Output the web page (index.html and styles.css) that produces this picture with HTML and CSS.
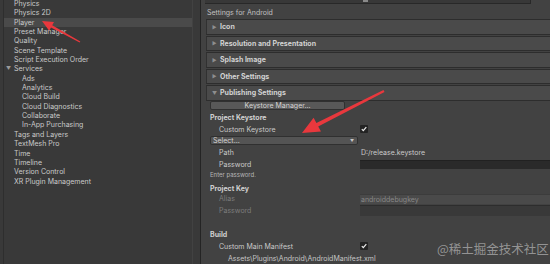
FILE: index.html
```html
<!DOCTYPE html>
<html lang="en">
<head>
  <meta charset="UTF-8" />
  <title>Project Settings · Player</title>
  <link rel="stylesheet" href="styles.css">
</head>
<body>
  <div class="sidebar">
    <ul class="tree">
      <li class="item">Physics</li>
      <li class="item">Physics 2D</li>
      <li class="item selected">Player</li>
      <li class="item">Preset Manager</li>
      <li class="item">Quality</li>
      <li class="item">Scene Template</li>
      <li class="item">Script Execution Order</li>
      <li class="item group"><span class="caret">▼</span>Services</li>
      <li class="item sub">Ads</li>
      <li class="item sub">Analytics</li>
      <li class="item sub">Cloud Build</li>
      <li class="item sub">Cloud Diagnostics</li>
      <li class="item sub">Collaborate</li>
      <li class="item sub">In-App Purchasing</li>
      <li class="item">Tags and Layers</li>
      <li class="item">TextMesh Pro</li>
      <li class="item">Time</li>
      <li class="item">Timeline</li>
      <li class="item">Version Control</li>
      <li class="item">XR Plugin Management</li>
    </ul>
  </div>
  <div class="splitter"></div>

  <div class="inspector">
    <div class="toolbar"><span class="toolbar-box"><span class="toolbar-mark"></span></span></div>
    <div class="platform">Settings for Android</div>

    <div class="foldout"><span class="arrow">▶</span>Icon</div>
    <div class="foldout"><span class="arrow">▶</span>Resolution and Presentation</div>
    <div class="foldout"><span class="arrow">▶</span>Splash Image</div>
    <div class="foldout"><span class="arrow">▶</span>Other Settings</div>
    <div class="foldout open"><span class="arrow">▼</span>Publishing Settings</div>

    <div class="section">
      <div class="btn">Keystore Manager...</div>

      <div class="heading h-keystore">Project Keystore</div>
      <div class="prop r-custom">
        <span class="prop-label">Custom Keystore</span>
        <span class="check"><svg viewBox="0 0 8 8"><path d="M1.8 4.2 L3.3 5.7 L6.3 2.2" /></svg></span>
      </div>
      <div class="dropdown"><span>Select...</span><span class="drop-caret">▼</span></div>
      <div class="prop r-path">
        <span class="prop-label">Path</span>
        <span class="value">D:/release.keystore</span>
      </div>
      <div class="prop r-pass">
        <span class="prop-label">Password</span>
        <span class="field"></span>
      </div>
      <div class="hint">Enter password.</div>

      <div class="heading h-key">Project Key</div>
      <div class="prop disabled r-alias">
        <span class="prop-label">Alias</span>
        <span class="field light">androiddebugkey</span>
      </div>
      <div class="prop disabled r-pass2">
        <span class="prop-label">Password</span>
        <span class="field dim"></span>
      </div>

      <div class="heading h-build">Build</div>
      <div class="prop r-manifest">
        <span class="prop-label">Custom Main Manifest</span>
        <span class="check"><svg viewBox="0 0 8 8"><path d="M1.8 4.2 L3.3 5.7 L6.3 2.2" /></svg></span>
      </div>
      <div class="path">Assets\Plugins\Android\AndroidManifest.xml</div>
    </div>
  </div>

  <svg class="arrows" width="550" height="264" viewBox="0 0 550 264">
    <polygon points="42,21 54,21.9 52.2,25.2 80.3,41.5 79.7,42.5 51,27.4 49.2,30.7" />
    <polygon points="302,133 313.6,117.8 316.4,123 383.5,90.1 384.5,91.9 318.2,126.6 321,131.6" />
  </svg>
  <div class="watermark">@稀土掘金技术社区</div>
</body>
</html>
```

FILE: styles.css
```css
* {
  margin: 0;
  padding: 0;
  box-sizing: border-box;
}
body {
  width: 550px;
  height: 264px;
  overflow: hidden;
  display: flex;
  position: relative;
  background: #393939;
  font-family: Inter, 'Noto Sans', sans-serif;
  font-size: 7px;
  color: #cacaca;
}

/* left tree */
.sidebar {
  width: 200px;
  flex: none;
  background: #393939;
}
.tree {
  list-style: none;
  margin: -1.2px 0 0 3px;
  width: 190px;
  height: calc(100% + 1.2px);
  border-left: 1px solid #2e2e2e;
  border-right: 1px solid #424242;
}
.item {
  height: 9.37px;
  line-height: 9.37px;
  padding-left: 10px;
  white-space: nowrap;
}
.item.sub {
  padding-left: 18px;
}
.item.group {
  padding-left: 2px;
}
.item.selected {
  background: #4a4a4a;
}
.caret {
  display: inline-block;
  width: 8px;
  font-size: 5px;
  color: #9a9a9a;
  vertical-align: top;
}
.splitter {
  width: 1px;
  flex: none;
  background: #242424;
}

/* inspector */
.inspector {
  flex: 1;
  background: #424242;
  display: flex;
  flex-direction: column;
  min-width: 0;
}
.toolbar {
  height: 4px;
  display: flex;
}
.toolbar-box {
  margin-left: 4px;
  width: 326px;
  height: 4px;
  background: #383838;
  border-right: 1px solid #282828;
  border-bottom: 1px solid #282828;
  display: flex;
}
.toolbar-mark {
  margin-left: 158px;
  width: 5px;
  height: 2px;
  background: #8a8a8a;
}
.platform {
  height: 15.5px;
  padding: 2.5px 0 0 6px;
  display: flex;
  align-items: center;
  color: #c0c0c0;
}
.foldout {
  margin-left: 5px;
  height: 16px;
  margin-bottom: 1px;
  background: #4a4a4a;
  border-top: 1px solid #2d2d2d;
  border-bottom: 1px solid #2d2d2d;
  border-left: 1px solid #313131;
  padding-left: 5px;
  display: flex;
  align-items: center;
  font-weight: 700;
  color: #d2d2d2;
  white-space: nowrap;
}
.foldout.open {
  margin-bottom: 0.5px;
}
.arrow {
  width: 8px;
  font-size: 5px;
  color: #8e8e8e;
  font-weight: 400;
}

.section {
  margin-left: 9px;
  display: flex;
  flex-direction: column;
}
.btn {
  width: 135px;
  height: 9px;
  background: #585858;
  border: 1px solid #303030;
  border-radius: 2px;
  display: flex;
  align-items: center;
  justify-content: center;
  color: #d4d4d4;
}
.heading {
  height: 10px;
  display: flex;
  align-items: center;
  font-weight: 700;
  color: #d0d0d0;
}
.h-keystore { margin-top: 1.3px; height: 12.5px; }
.h-key { margin-top: 4.85px; }
.h-build { margin-top: 13px; }

.prop {
  display: flex;
  align-items: center;
  white-space: nowrap;
}
.prop-label {
  width: 150px;
  flex: none;
  padding-left: 9px;
}
.r-custom { height: 10.5px; }
.r-path { height: 11.7px; margin-top: 1.75px; }
.r-pass { height: 11.7px; }
.r-alias { height: 11px; }
.r-pass2 { height: 12px; }
.r-manifest { height: 13.5px; }

.value {
  padding-left: 1px;
  color: #cacaca;
}
.check {
  width: 8px;
  height: 8px;
  background: #232323;
  border-radius: 1px;
  display: flex;
}
.check svg {
  width: 8px;
  height: 8px;
  fill: none;
  stroke: #ececec;
  stroke-width: 1.2;
}
.dropdown {
  margin-top: 1.7px;
  width: 148px;
  height: 9px;
  background: #545454;
  border: 1px solid #303030;
  border-radius: 2px;
  padding: 0 3px 0 2px;
  display: flex;
  align-items: center;
  justify-content: space-between;
  color: #d2d2d2;
}
.drop-caret {
  font-size: 4px;
  color: #c8c8c8;
}
.field {
  flex: 1;
  height: 9.5px;
  background: #2a2a2a;
  border-top: 1px solid #212121;
  padding-left: 1px;
  display: flex;
  align-items: center;
}
.field.light {
  height: 10px;
  background: #4a4a4a;
  border-top: 1px solid #3c3c3c;
  color: #888888;
}
.field.dim {
  height: 11px;
  background: #393939;
  border-top: 1px solid #2d2d2d;
}
.disabled .prop-label {
  color: #7c7c7c;
}
.hint {
  height: 8.3px;
  display: flex;
  align-items: center;
  font-size: 6px;
  color: #b6b6b6;
}
.path {
  height: 11px;
  padding-left: 18px;
  display: flex;
  align-items: center;
  white-space: nowrap;
  color: #c6c6c6;
}

/* annotations over the screenshot */
.arrows {
  position: absolute;
  left: 0;
  top: 0;
  pointer-events: none;
  fill: #e8383d;
}
.watermark {
  position: absolute;
  left: 437px;
  top: 239px;
  font-family: 'Noto Sans CJK SC', sans-serif;
  font-size: 12.5px;
  color: rgba(220, 220, 220, 0.55);
  white-space: nowrap;
}
```
